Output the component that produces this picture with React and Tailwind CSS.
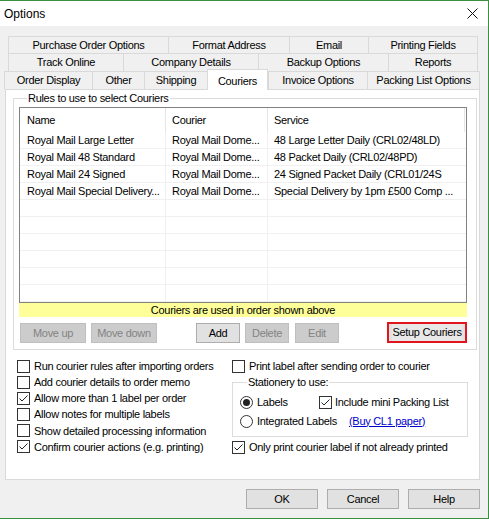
import React from "react";

const rules = [
  ["Royal Mail Large Letter", "Royal Mail Dome...", "48 Large Letter Daily (CRL02/48LD)"],
  ["Royal Mail 48 Standard", "Royal Mail Dome...", "48 Packet Daily (CRL02/48PD)"],
  ["Royal Mail 24 Signed", "Royal Mail Dome...", "24 Signed Packet Daily (CRL01/24S"],
  ["Royal Mail Special Delivery...", "Royal Mail Dome...", "Special Delivery by 1pm £500 Comp ..."],
  ["", "", ""],
  ["", "", ""],
  ["", "", ""],
  ["", "", ""],
  ["", "", ""],
  ["", "", ""],
];

function Tab({ label, w, selected }) {
  if (selected) {
    return (
      <div
        className={`relative z-10 -mt-[2px] h-[21px] ${w} flex items-start justify-center pt-[3px] bg-white border-l border-r border-t border-[#d9d9d9]`}
      >
        {label}
      </div>
    );
  }
  return (
    <div className={`${w} h-full flex items-center justify-center border-l border-t border-[#d9d9d9] last:border-r`}>
      {label}
    </div>
  );
}

function Checkbox({ checked }) {
  return (
    <span className="w-[13px] h-[13px] shrink-0 border border-[#333333] bg-white flex items-center justify-center">
      {checked && (
        <svg width="11" height="11" viewBox="0 0 11 11">
          <polyline points="1.5,5.5 4,8 9.5,2.5" fill="none" stroke="#222" strokeWidth="1" />
        </svg>
      )}
    </span>
  );
}

function Radio({ checked }) {
  return (
    <span className="w-[13px] h-[13px] shrink-0 rounded-full border border-[#333333] bg-white flex items-center justify-center">
      {checked && <span className="w-[7px] h-[7px] rounded-full bg-[#222]" />}
    </span>
  );
}

function CheckRow({ label, checked }) {
  return (
    <div className="h-[16px] flex items-center gap-[4px] whitespace-nowrap">
      <Checkbox checked={checked} />
      <span>{label}</span>
    </div>
  );
}

function Btn({ children, w, disabled }) {
  return (
    <div
      className={`${w} h-[20px] flex items-center justify-center border ${
        disabled ? "bg-[#cccccc] border-[#bfbfbf] text-[#838383]" : "bg-[#e1e1e1] border-[#adadad] text-black"
      }`}
    >
      {children}
    </div>
  );
}

export default function App() {
  return (
    <div className="w-[489px] h-[519px] flex flex-col bg-[#f0f0f0] border-t border-r border-b border-[#3b8f3f] text-[11px] tracking-[-0.3px] text-black font-['Liberation_Sans',Arial,sans-serif] overflow-hidden">
      {/* Title bar */}
      <div className="h-[25px] bg-white flex items-center justify-between pl-[4px] pr-[10px] shrink-0">
        <span className="text-[12px] tracking-normal">Options</span>
        <svg width="11" height="11" viewBox="0 0 11 11">
          <path d="M0.5 0.5 L10.5 10.5 M10.5 0.5 L0.5 10.5" stroke="#111" strokeWidth="1" />
        </svg>
      </div>

      {/* Tabs */}
      <div className="mt-[10px] flex flex-col">
        <div className="ml-[8px] w-[470px] h-[17px] flex">
          <Tab label="Purchase Order Options" w="w-[160px]" />
          <Tab label="Format Address" w="w-[121px]" />
          <Tab label="Email" w="w-[79px]" />
          <Tab label="Printing Fields" w="w-[110px]" />
        </div>
        <div className="ml-[8px] w-[470px] h-[18px] flex">
          <Tab label="Track Online" w="w-[115px]" />
          <Tab label="Company Details" w="w-[135px]" />
          <Tab label="Backup Options" w="w-[130px]" />
          <Tab label="Reports" w="w-[90px]" />
        </div>
        <div className="ml-[4px] w-[476px] h-[18px] flex items-start">
          <Tab label="Order Display" w="w-[88px]" />
          <Tab label="Other" w="w-[52px]" />
          <Tab label="Shipping" w="w-[63px]" />
          <Tab label="Couriers" w="w-[61px]" selected />
          <Tab label="Invoice Options" w="w-[99px]" />
          <Tab label="Packing List Options" w="w-[113px]" />
        </div>
      </div>

      {/* Tab page */}
      <div className="ml-[5px] w-[475px] h-[391px] bg-white border border-[#d9d9d9] shrink-0">
        <fieldset className="ml-[7px] mt-[2px] w-[464px] h-[258px] border border-[#dcdcdc] px-[5px]">
          <legend className="ml-[8px] px-[1px] leading-[13px]">Rules to use to select Couriers</legend>

          {/* List view */}
          <div className="mt-[2px] w-[448px] h-[196px] border border-[#828282] bg-white overflow-hidden">
            <div className="h-[24px] flex">
              <div className="w-[146px] h-full flex items-center pl-[7px] border-r border-[#e5e5e5]">Name</div>
              <div className="w-[102px] h-full flex items-center pl-[6px] border-r border-[#e5e5e5]">Courier</div>
              <div className="w-[197px] h-full flex items-center pl-[6px] border-r border-[#e5e5e5]">Service</div>
            </div>
            {rules.map((r, i) => (
              <div key={i} className="h-[17px] flex border-b border-[#f0f0f0] whitespace-nowrap">
                <div className="w-[146px] flex items-center pl-[7px] border-r border-[#f0f0f0] overflow-hidden">{r[0]}</div>
                <div className="w-[102px] flex items-center pl-[6px] border-r border-[#f0f0f0] overflow-hidden">{r[1]}</div>
                <div className="w-[197px] flex items-center pl-[6px] overflow-hidden">{r[2]}</div>
              </div>
            ))}
          </div>
          <div className="w-[448px] h-[14px] bg-[#ffff99] flex items-center justify-center">
            Couriers are used in order shown above
          </div>

          {/* Buttons */}
          <div className="mt-[6px] ml-[1px] flex">
            <Btn w="w-[66px]" disabled>Move up</Btn>
            <div className="ml-[5px]">
              <Btn w="w-[66px]" disabled>Move down</Btn>
            </div>
            <div className="ml-[39px]">
              <Btn w="w-[44px]">Add</Btn>
            </div>
            <div className="ml-[5px]">
              <Btn w="w-[44px]" disabled>Delete</Btn>
            </div>
            <div className="ml-[6px]">
              <Btn w="w-[44px]" disabled>Edit</Btn>
            </div>
            <div className="ml-[48px] w-[80px] h-[21px] -mt-[1px] border-2 border-[#e2141e] bg-[#e1e1e1] flex items-center justify-center">
              <span className="bg-[#e8e8e8]">Setup Couriers</span>
            </div>
          </div>
        </fieldset>

        {/* Options below */}
        <div className="mt-[8px] flex">
          <div className="ml-[11px] w-[215px] flex flex-col gap-[0.2px]">
            <CheckRow label="Run courier rules after importing orders" />
            <CheckRow label="Add courier details to order memo" />
            <CheckRow label="Allow more than 1 label per order" checked />
            <CheckRow label="Allow notes for multiple labels" />
            <CheckRow label="Show detailed processing information" />
            <CheckRow label="Confirm courier actions (e.g. printing)" checked />
          </div>
          <div className="flex flex-col">
            <CheckRow label="Print label after sending order to courier" />
            <fieldset className="mt-[2px] w-[236px] h-[61px] border border-[#dcdcdc] pl-[7px]">
              <legend className="ml-[7px] px-[1px] leading-[13px]">Stationery to use:</legend>
              <div className="mt-[5px] h-[16px] flex items-center">
                <div className="w-[79px] flex items-center gap-[4px]">
                  <Radio checked />
                  <span>Labels</span>
                </div>
                <Checkbox checked />
                <span className="ml-[3px]">Include mini Packing List</span>
              </div>
              <div className="mt-[3px] h-[16px] flex items-center">
                <div className="w-[109px] flex items-center gap-[4px]">
                  <Radio />
                  <span>Integrated Labels</span>
                </div>
                <span className="text-[#0000cc] underline">(Buy CL1 paper)</span>
              </div>
            </fieldset>
            <div className="mt-[2px]">
              <CheckRow label="Only print courier label if not already printed" checked />
            </div>
          </div>
        </div>
      </div>

      {/* Dialog buttons */}
      <div className="mt-[9px] ml-[5px] w-[475px] flex justify-end gap-[9px]">
        <Btn w="w-[72px]">OK</Btn>
        <Btn w="w-[72px]">Cancel</Btn>
        <Btn w="w-[72px]">Help</Btn>
      </div>
    </div>
  );
}
